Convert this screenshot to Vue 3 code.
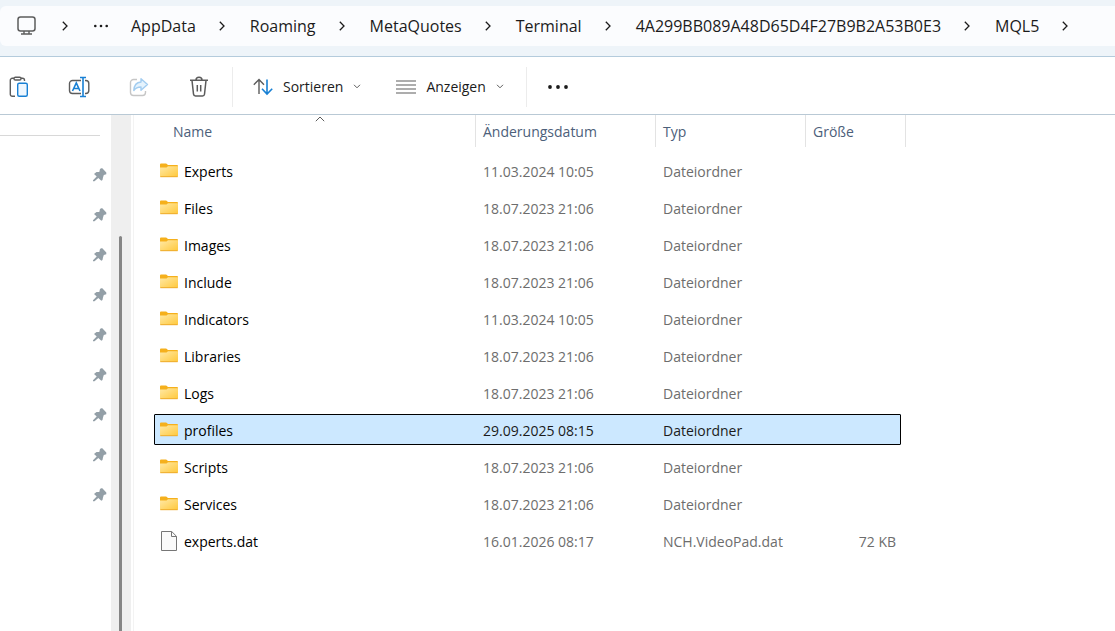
<template>
  <div class="explorer">
    <header class="address-area">
      <nav class="address-bar" aria-label="Adresse">
        <button type="button" class="crumb-icon" aria-label="Dieser PC">
          <svg width="20" height="20" viewBox="0 0 20 20" fill="none" stroke="#5c5c5c">
            <rect x="1" y="1" width="17" height="14" rx="2.5" stroke-width="1.5" />
            <path d="M7 15v2.5M12 15v2.5M4 18h11" stroke-width="1.4" />
          </svg>
        </button>
        <svg class="chevron" viewBox="0 0 6 10"><path d="M.8.8 5 5 .8 9.2" /></svg>
        <button type="button" class="crumb-more" aria-label="Weitere Ordner">
          <svg width="16" height="4" viewBox="0 0 16 4" fill="#1b1b1b">
            <circle cx="2.3" cy="2" r="1.3" /><circle cx="8" cy="2" r="1.3" /><circle cx="13.7" cy="2" r="1.3" />
          </svg>
        </button>
        <ol class="crumbs">
          <li v-for="crumb in crumbs" :key="crumb">
            <a href="#">{{ crumb }}</a>
            <svg class="chevron" viewBox="0 0 6 10"><path d="M.8.8 5 5 .8 9.2" /></svg>
          </li>
        </ol>
      </nav>
    </header>

    <div class="toolbar" role="toolbar" aria-label="Befehle">
      <div class="tools">
        <button type="button" aria-label="Einfügen">
          <svg width="20" height="22" viewBox="0 0 20 22" fill="none" stroke-width="1.4">
            <path d="M6 20.3H3.3A2 2 0 0 1 1.3 18.3V4.3A2 2 0 0 1 3.3 2.3H5M12 2.3h1.5a2 2 0 0 1 2 2V5" stroke="#5c5c5c" />
            <rect x="5" y="1.3" width="7" height="2.7" rx="1.3" stroke="#5c5c5c" />
            <rect x="8.7" y="7.3" width="9.6" height="13" rx="1.5" fill="#eef7ff" stroke="#1880d4" />
          </svg>
        </button>
        <button type="button" aria-label="Umbenennen">
          <svg width="22" height="22" viewBox="0 0 22 22" fill="none" stroke-width="1.4">
            <path d="M13 17.5H4.5a3 3 0 0 1-3-3v-7a3 3 0 0 1 3-3H13M17 4.5h.8a3 3 0 0 1 3 3v7a3 3 0 0 1-3 3H17" stroke="#5c5c5c" />
            <path d="M4.5 15 8.3 7 12 15M5.8 12.5h5" stroke="#1880d4" stroke-width="1.6" />
            <path d="M12 1.5h6M12 20.5h6M15 1.5v19" stroke="#1880d4" stroke-width="1.6" />
          </svg>
        </button>
        <button type="button" aria-label="Freigeben" disabled>
          <svg width="20" height="20" viewBox="0 0 20 20" fill="none" stroke-width="1.4">
            <path d="M8 2.5H4.500a3 3 0 0 0-3 3v10a3 3 0 0 0 3 3h9a3 3 0 0 0 3-3V14" stroke="#c6c6c6" />
            <path d="M12 1.8 18.5 7.5 12 13.2V10C8.5 10 6.5 11 4.8 13.5 5 9 7.5 5.4 12 5Z" stroke="#a3cdf0" fill="#e5f3fd" stroke-linejoin="round" />
          </svg>
        </button>
        <button type="button" aria-label="Löschen">
          <svg width="20" height="22" viewBox="0 0 20 22" fill="none" stroke="#5c5c5c" stroke-width="1.5">
            <path d="M1 4.2h18M7 4a3 2.8 0 0 1 6 0M3 4.5l1.5 13.7a2 2 0 0 0 2 1.8h7a2 2 0 0 0 2-1.8L17 4.5" />
            <path d="M8.3 9v6.5M11.7 9v6.5" />
          </svg>
        </button>
      </div>

      <div class="menus">
        <button type="button" class="menu-button">
          <svg width="20" height="18" viewBox="0 0 20 18" fill="none" stroke-width="1.4">
            <path d="M6 16V1.5M.8 6.700 6 1.5l5 5.2" stroke="#5c5c5c" />
            <path d="M14 1.5V16M9 10.8l5 5.2 5.2-5.2" stroke="#1880d4" stroke-width="1.6" />
          </svg>
          <span>Sortieren</span>
          <svg class="caret" viewBox="0 0 8 5"><path d="M1 .8l3 3 3-3" /></svg>
        </button>
        <button type="button" class="menu-button">
          <svg width="20" height="14" viewBox="0 0 20 14" fill="none" stroke="#5c5c5c" stroke-width="1.2">
            <path d="M0 1h20M0 5h20M0 9h20M0 13h20" />
          </svg>
          <span>Anzeigen</span>
          <svg class="caret" viewBox="0 0 8 5"><path d="M1 .8l3 3 3-3" /></svg>
        </button>
      </div>

      <button type="button" class="overflow" aria-label="Mehr anzeigen">
        <svg width="22" height="4" viewBox="0 0 22 4" fill="#1b1b1b">
          <circle cx="3" cy="2" r="1.9" /><circle cx="11" cy="2" r="1.9" /><circle cx="19" cy="2" r="1.9" />
        </svg>
      </button>
    </div>

    <div class="content">
      <aside class="sidebar">
        <ul>
          <li v-for="n in 9" :key="n">
            <svg width="14" height="14" viewBox="0 0 14 14" fill="#939fa7">
              <path d="M7 1 8.3.2h1L13.3 4.5V6.3L10.8 7 10 9.5 9.5 12 8.3 12.7 5.3 9.9 1.5 13.3H0V12.3L3.7 8.4 1 5.9 3.5 4.1 6.3 3.9Z" />
            </svg>
          </li>
        </ul>
      </aside>
      <div class="scrollbar"><div class="thumb"></div></div>

      <main class="files">
        <table>
          <thead>
            <tr>
              <th scope="col" aria-sort="ascending">
                Name
                <svg class="sort-mark" width="10" height="6" viewBox="0 0 10 6"><path d="M.8 5.2 5 1l4.2 4.2" /></svg>
              </th>
              <th scope="col">Änderungsdatum</th>
              <th scope="col">Typ</th>
              <th scope="col">Größe</th>
            </tr>
          </thead>
          <tbody>
            <tr v-for="file in files" :key="file.name" :class="{ selected: file.name === selected }" @click="selected = file.name">
              <td class="name">
                <svg v-if="file.type === 'Dateiordner'" width="18" height="15" viewBox="0 0 18 15">
                  <path d="M0 1.5Q0 .5 1 .5h5.2L8 2h9q1 0 1 1v2H0Z" fill="#f5b01c" />
                  <path d="M0 4.5h6.5L8 3.3h10V13q0 1-1 1H1q-1 0-1-1Z" fill="url(#folder-front)" />
                  <path d="M.3 13.7h17.4" stroke="#eeac2d" />
                </svg>
                <svg v-else width="18" height="20" viewBox="0 0 18 20" stroke="#767676" stroke-linejoin="round">
                  <path d="M1.5.5h10.2l4.8 4.8v14.2h-15Z" fill="#fafafa" />
                  <path d="M11.5.5v5h5" fill="none" />
                </svg>
                <span>{{ file.name }}</span>
              </td>
              <td>{{ file.date }}</td>
              <td>{{ file.type }}</td>
              <td class="size">{{ file.size }}</td>
            </tr>
          </tbody>
        </table>
      </main>
    </div>

    <svg class="defs" width="0" height="0" aria-hidden="true">
      <linearGradient id="folder-front" x1="0" y1="0" x2="1" y2="1">
        <stop offset="0" stop-color="#ffe9a6" />
        <stop offset="1" stop-color="#ffc83a" />
      </linearGradient>
    </svg>
  </div>
</template>

<script setup>
import { ref } from 'vue'

const crumbs = ['AppData', 'Roaming', 'MetaQuotes', 'Terminal', '4A299BB089A48D65D4F27B9B2A53B0E3', 'MQL5']

const selected = ref('profiles')

const files = [
  { name: 'Experts', date: '11.03.2024 10:05', type: 'Dateiordner' },
  { name: 'Files', date: '18.07.2023 21:06', type: 'Dateiordner' },
  { name: 'Images', date: '18.07.2023 21:06', type: 'Dateiordner' },
  { name: 'Include', date: '18.07.2023 21:06', type: 'Dateiordner' },
  { name: 'Indicators', date: '11.03.2024 10:05', type: 'Dateiordner' },
  { name: 'Libraries', date: '18.07.2023 21:06', type: 'Dateiordner' },
  { name: 'Logs', date: '18.07.2023 21:06', type: 'Dateiordner' },
  { name: 'profiles', date: '29.09.2025 08:15', type: 'Dateiordner' },
  { name: 'Scripts', date: '18.07.2023 21:06', type: 'Dateiordner' },
  { name: 'Services', date: '18.07.2023 21:06', type: 'Dateiordner' },
  { name: 'experts.dat', date: '16.01.2026 08:17', type: 'NCH.VideoPad.dat', size: '72 KB' }
]
</script>

<style>
body {
  margin: 0;
  background: #ffffff;
}
</style>

<style scoped>
.explorer {
  display: flex;
  flex-direction: column;
  min-height: 100vh;
  overflow: hidden;
  font-family: 'Segoe UI', 'Open Sans', 'Noto Sans', sans-serif;
  font-size: 14px;
  line-height: 20px;
  color: #1b1b1b;
}

button {
  display: flex;
  align-items: center;
  justify-content: center;
  padding: 0;
  border: none;
  background: none;
  font: inherit;
  color: inherit;
}

svg {
  flex-shrink: 0;
}

.address-area {
  padding: 6px 0 10px;
  background: #eef4f9;
  border-bottom: 1px solid #b4cbdc;
}

.address-bar {
  display: flex;
  align-items: center;
  height: 40px;
  padding-left: 17px;
  border-radius: 6px 0 0 6px;
  background: #fbfcfe;
}

.crumb-icon {
  width: 20px;
  margin-right: 25px;
}

.crumb-more {
  margin: 0 22px 0 25px;
}

.crumbs,
.sidebar ul {
  margin: 0;
  padding: 0;
  list-style: none;
}

.crumbs {
  display: flex;
  gap: 25px;
}

.crumbs li {
  display: flex;
  align-items: center;
  gap: 23px;
}

.crumbs a {
  font-size: 16px;
  color: inherit;
  text-decoration: none;
}

.chevron {
  width: 6px;
  height: 10px;
  fill: none;
  stroke: #1b1b1b;
  stroke-width: 1.3;
}

.toolbar {
  display: flex;
  align-items: center;
  box-sizing: border-box;
  height: 58px;
  padding-top: 2px;
  border-bottom: 1px solid #b9c9d5;
}

.tools {
  display: flex;
  gap: 22px;
  padding-right: 14px;
}

.tools button {
  width: 38px;
  height: 40px;
}

.menus {
  display: flex;
  gap: 35px;
  padding: 0 22px 0 20px;
  border-left: 1px solid #ececec;
  border-right: 1px solid #ececec;
}

.menu-button {
  gap: 10px;
  height: 40px;
}

.caret {
  width: 8px;
  height: 5px;
  fill: none;
  stroke: #5c5c5c;
}

.overflow {
  height: 40px;
  padding: 0 20px;
}

.content {
  display: flex;
  flex: 1;
}

.sidebar {
  width: 111px;
}

.sidebar ul {
  margin-right: 11px;
  padding-top: 20px;
}

.sidebar ul::before {
  content: '';
  display: block;
  height: 1px;
  margin-bottom: 19px;
  background: #d8d8d8;
}

.sidebar li {
  display: flex;
  align-items: center;
  justify-content: flex-end;
  height: 40px;
  margin-right: -7px;
}

.scrollbar {
  display: flex;
  width: 20px;
  padding: 121px 0 0 8px;
  box-sizing: border-box;
  background: #efefef;
}

.thumb {
  width: 3px;
  border-radius: 2px 2px 0 0;
  background: #858585;
}

.files {
  flex: 1;
  margin-left: 2px;
  border-left: 1px solid #f3f3f3;
}

table,
thead,
tbody {
  display: block;
}

tr {
  display: grid;
}

thead tr {
  grid-template-columns: 311px 180px 150px 100px;
  margin-left: 31px;
}

th {
  position: relative;
  padding: 7px 0 5px 8px;
  border-right: 1px solid #e3e3e3;
  font-weight: 400;
  text-align: left;
  color: #4c607a;
}

th + th,
td + td {
  padding-left: 7px;
}

.sort-mark {
  position: absolute;
  top: 1px;
  left: 50%;
  margin-left: -5px;
  fill: none;
  stroke: #5c5c5c;
}

tbody {
  padding-top: 8px;
}

tbody tr {
  grid-template-columns: 322px 180px 150px 95px;
  align-items: center;
  width: 747px;
  height: 31px;
  margin: 0 0 6px 20px;
  border-radius: 1px;
}

tbody tr.selected {
  background: #cce8ff;
  outline: 1px solid #000000;
  outline-offset: -1px;
}

td {
  padding: 2px 0 0;
  color: #6d6d6d;
}

.name {
  display: flex;
  align-items: center;
  gap: 6px;
  padding-left: 6px;
  color: #000000;
}

.name svg {
  margin-bottom: 2px;
}

.selected td {
  color: #1b1b1b;
}

.selected .name {
  color: #000000;
}

.size {
  padding-right: 5px;
  text-align: right;
}

.defs {
  position: absolute;
}
</style>
